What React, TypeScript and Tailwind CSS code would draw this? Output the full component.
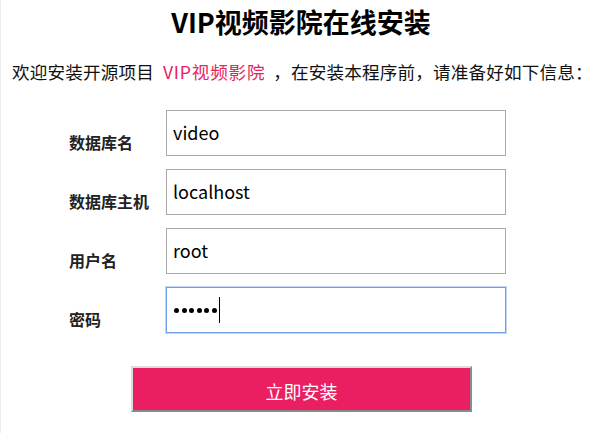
import React from "react";

const font = { fontFamily: '"Microsoft YaHei", "Noto Sans CJK SC", "Noto Sans", sans-serif' };

function Field({ label, value, focused, password }: { label: string; value: string; focused?: boolean; password?: boolean }) {
  return (
    <div className="flex items-start h-[46px]">
      <div className="w-[97px] pl-[68px] box-content shrink-0 pt-[20px] text-[16px] font-bold leading-[24px] text-[#222] whitespace-nowrap">
        {label}
      </div>
      <div
        className={
          "w-[340px] h-[46px] bg-white flex items-center pl-[6px] text-[18px] text-black " +
          (focused
            ? "border border-[#6f9de6] shadow-[0_0_0_1px_#c5d8f5]"
            : "border border-[#a9a9a9]")
        }
      >
        {password ? (
          <span className="flex items-center pl-[1px]">
            <span className="flex items-center gap-[2.5px]">
              {[0, 1, 2, 3, 4, 5].map((i) => (
                <span key={i} className="block w-[5px] h-[5px] rounded-full bg-black" />
              ))}
            </span>
            <span className="ml-[2px] inline-block w-[1px] h-[26px] bg-black" />
          </span>
        ) : (
          <span className="leading-none relative top-[-1px]">{value}</span>
        )}
      </div>
    </div>
  );
}

export default function App() {
  return (
    <div className="w-[593px] h-[433px] bg-white border-l border-[#ececec] overflow-hidden" style={font}>
      <h1 className="pt-[4px] pl-[8px] text-center text-[27px] font-bold leading-[36px] text-black">
        VIP视频影院在线安装
      </h1>
      <p className="mt-[20px] pl-[11px] text-[17.6px] leading-[24px] text-[#111] whitespace-nowrap tracking-[0.15px]">
        欢迎安装开源项目<span className="ml-[9px] tracking-[0.8px] text-[#e8245f]">VIP视频影院</span>
        <span className="ml-[8px]">，在安装本程序前，请准备好如下信息：</span>
      </p>
      <div className="mt-[26px] flex flex-col gap-[13px]">
        <Field label="数据库名" value="video" />
        <Field label="数据库主机" value="localhost" />
        <Field label="用户名" value="root" />
        <Field label="密码" value="" password focused />
      </div>
      <div className="mt-[33px] pl-[130px]">
        <button className="w-[341px] h-[46px] bg-[#ea1f62] border-2 border-t-[#dcdcdc] border-l-[#dcdcdc] border-b-[#8a8a8a] border-r-[#8a8a8a] text-white text-[18px] leading-none pt-[3px]">
          立即安装
        </button>
      </div>
    </div>
  );
}
